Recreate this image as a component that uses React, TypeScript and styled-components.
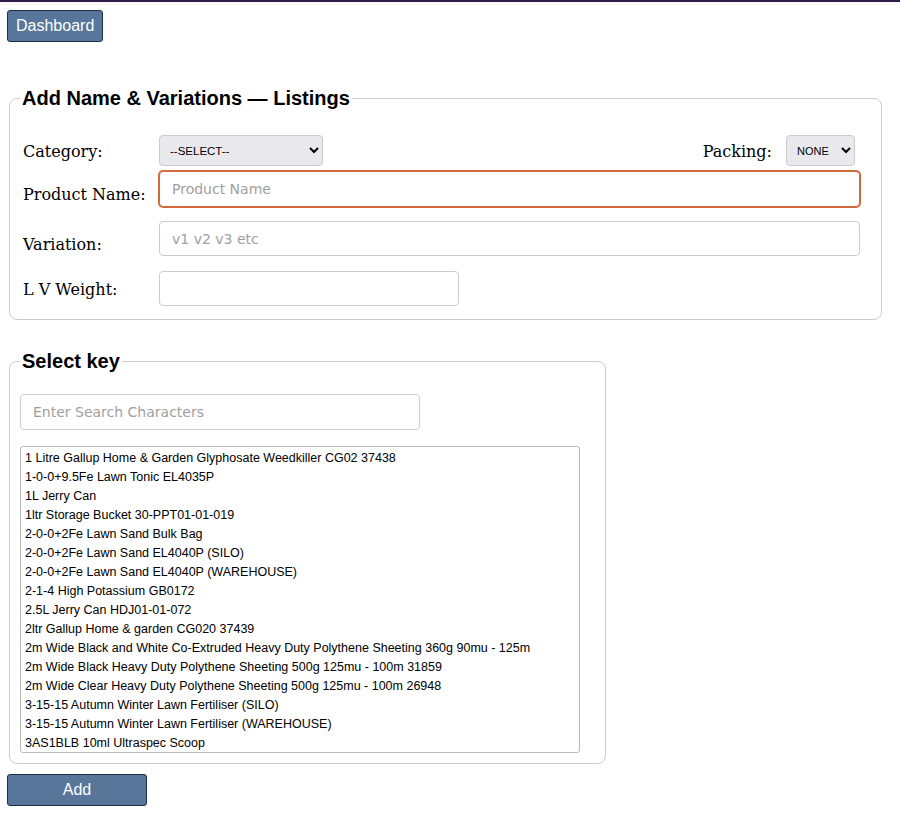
import React from "react";
import styled, { createGlobalStyle } from "styled-components";

const GlobalStyle = createGlobalStyle`
  html, body { margin: 0; padding: 0; background: #ffffff; }
  body { font-family: "DejaVu Serif", serif; color: #000; }
  * { box-sizing: border-box; }
`;

const TopLine = styled.div`
  height: 2px;
  background: #2f1b4b;
`;

const Page = styled.div`
  padding: 8px 0 16px 7px;
  display: flex;
  flex-direction: column;
  align-items: flex-start;
`;

const ActionButton = styled.button<{ $wide?: boolean }>`
  height: 32px;
  width: ${(p) => (p.$wide ? "140px" : "auto")};
  padding: 0 8px;
  background: #577699;
  border: 1px solid #1e2f4c;
  border-radius: 3px;
  color: #ffffff;
  font-family: "Liberation Sans", Arial, sans-serif;
  font-size: 16px;
  line-height: 30px;
  cursor: pointer;
`;

const Fieldset = styled.fieldset<{ $width: number; $top: number; $padRight: number; $padBottom: number; $padTop: number }>`
  width: ${(p) => p.$width}px;
  margin: ${(p) => p.$top}px 0 0 2px;
  padding: ${(p) => p.$padTop}px ${(p) => p.$padRight}px ${(p) => p.$padBottom}px 10px;
  border: 1px solid #cccccc;
  border-radius: 8px;
  min-inline-size: 0;
`;

const Legend = styled.legend`
  padding: 0 2px;
  font-family: "Liberation Sans", Arial, sans-serif;
  font-weight: bold;
  font-size: 20px;
  line-height: 23px;
`;

const FormBody = styled.div`
  padding-left: 3px;
  display: flex;
  flex-direction: column;
`;

const Row = styled.div<{ $top: number }>`
  display: grid;
  grid-template-columns: 136px 1fr;
  align-items: start;
  margin-top: ${(p) => p.$top}px;
`;

const Label = styled.label<{ $offset: number }>`
  font-family: "DejaVu Serif", serif;
  font-size: 16px;
  line-height: 19px;
  padding-top: ${(p) => p.$offset}px;
  white-space: nowrap;
`;

const Controls = styled.div`
  display: flex;
  align-items: center;
`;

const Select = styled.select<{ $width: number; $size: number; $trail?: number }>`
  width: ${(p) => p.$width}px;
  height: 31px;
  margin-right: ${(p) => p.$trail ?? 0}px;
  padding: 0 4px 0 6px;
  background: #e9e9ed;
  border: 1px solid #c9c9cf;
  border-radius: 4px;
  font-family: "Liberation Sans", Arial, sans-serif;
  font-size: ${(p) => p.$size}px;
  color: #000;
`;

const Spacer = styled.div`
  flex: 1;
`;

const SideLabel = styled.label`
  font-family: "DejaVu Serif", serif;
  font-size: 16px;
  line-height: 19px;
  margin-right: 14px;
  padding-top: 2px;
`;

const TextInput = styled.input<{ $width?: number; $height: number; $focused?: boolean }>`
  width: ${(p) => (p.$width ? `${p.$width}px` : "100%")};
  height: ${(p) => p.$height}px;
  padding: 0 12px;
  border: 1px solid ${(p) => (p.$focused ? "#d2693b" : "#cccccc")};
  box-shadow: ${(p) => (p.$focused ? "0 0 0 1px #d2693b" : "none")};
  border-radius: 4px;
  outline: none;
  font-family: "DejaVu Sans", sans-serif;
  font-size: 14px;
  color: #000;
  background: #fff;
  &::placeholder {
    color: #a0a0a0;
  }
`;

const ListBox = styled.div`
  margin-top: 16px;
  width: 560px;
  height: 307px;
  border: 1px solid #b8b8b8;
  border-radius: 3px;
  overflow: hidden;
  padding-top: 2px;
`;

const ListItem = styled.div`
  height: 19px;
  line-height: 19px;
  padding: 0 4px;
  font-family: "Liberation Sans", Arial, sans-serif;
  font-size: 12.5px;
  color: #000;
  white-space: nowrap;
`;

const AddRow = styled.div`
  margin-top: 10px;
`;

const keys = [
  "1 Litre Gallup Home & Garden Glyphosate Weedkiller CG02 37438",
  "1-0-0+9.5Fe Lawn Tonic EL4035P",
  "1L Jerry Can",
  "1ltr Storage Bucket 30-PPT01-01-019",
  "2-0-0+2Fe Lawn Sand Bulk Bag",
  "2-0-0+2Fe Lawn Sand EL4040P (SILO)",
  "2-0-0+2Fe Lawn Sand EL4040P (WAREHOUSE)",
  "2-1-4 High Potassium GB0172",
  "2.5L Jerry Can HDJ01-01-072",
  "2ltr Gallup Home & garden CG020 37439",
  "2m Wide Black and White Co-Extruded Heavy Duty Polythene Sheeting 360g 90mu - 125m",
  "2m Wide Black Heavy Duty Polythene Sheeting 500g 125mu - 100m 31859",
  "2m Wide Clear Heavy Duty Polythene Sheeting 500g 125mu - 100m 26948",
  "3-15-15 Autumn Winter Lawn Fertiliser (SILO)",
  "3-15-15 Autumn Winter Lawn Fertiliser (WAREHOUSE)",
  "3AS1BLB 10ml Ultraspec Scoop",
];

export default function App() {
  return (
    <>
      <GlobalStyle />
      <TopLine />
      <Page>
        <ActionButton>Dashboard</ActionButton>

        <Fieldset $width={873} $top={45} $padTop={25} $padRight={21} $padBottom={13}>
          <Legend>Add Name &amp; Variations — Listings</Legend>
          <FormBody>
            <Row $top={0}>
              <Label $offset={7}>Category:</Label>
              <Controls>
                <Select $width={164} $size={11.5} defaultValue="">
                  <option value="">--SELECT--</option>
                </Select>
                <Spacer />
                <SideLabel>Packing:</SideLabel>
                <Select $width={69} $size={11} $trail={5} defaultValue="NONE">
                  <option value="NONE">NONE</option>
                </Select>
              </Controls>
            </Row>
            <Row $top={5}>
              <Label $offset={14}>Product Name:</Label>
              <TextInput $height={36} $focused placeholder="Product Name" />
            </Row>
            <Row $top={14}>
              <Label $offset={14}>Variation:</Label>
              <TextInput $height={35} placeholder="v1 v2 v3 etc" />
            </Row>
            <Row $top={15}>
              <Label $offset={9}>L V Weight:</Label>
              <TextInput $height={35} $width={300} />
            </Row>
          </FormBody>
        </Fieldset>

        <Fieldset $width={597} $top={30} $padTop={21} $padRight={24} $padBottom={10}>
          <Legend>Select key</Legend>
          <TextInput $height={36} $width={400} placeholder="Enter Search Characters" />
          <ListBox role="listbox">
            {keys.map((k) => (
              <ListItem key={k} role="option">
                {k}
              </ListItem>
            ))}
          </ListBox>
        </Fieldset>

        <AddRow>
          <ActionButton $wide>Add</ActionButton>
        </AddRow>
      </Page>
    </>
  );
}
